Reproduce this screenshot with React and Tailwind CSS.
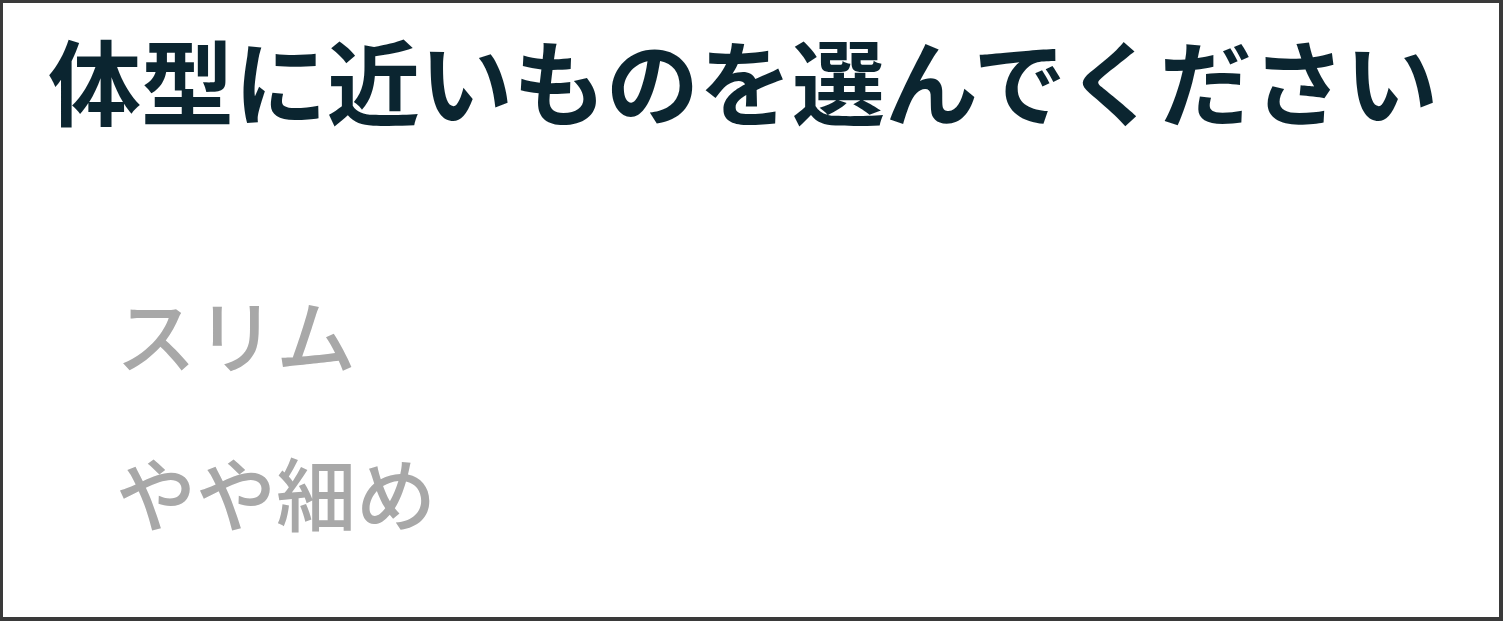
export default function App() {
  const options = ["スリム", "やや細め"];

  return (
    <div className="w-[1503px] h-[621px] bg-white border-[#3a3a3a] border-t-[3px] border-l-[3px] border-r-[4px] border-b-[4px] overflow-hidden" style={{ fontFamily: '"Noto Sans CJK JP", sans-serif' }}>
      <h1 className="pl-[45px] pt-[16px] text-[93px] leading-[120px] font-bold text-[#0b2530] whitespace-nowrap">
        体型に近いものを選んでください
      </h1>
      <ul className="pl-[113px] pt-[145px] flex flex-col gap-[62px]">
        {options.map((o) => (
          <li key={o} className="text-[80px] leading-[96px] font-medium text-[#a8a8a8]">
            {o}
          </li>
        ))}
      </ul>
    </div>
  );
}
